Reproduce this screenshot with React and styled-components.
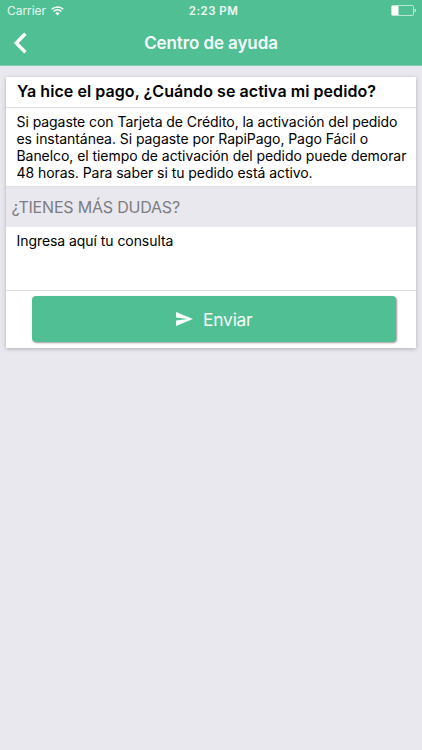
import styled, { createGlobalStyle } from 'styled-components';

const GlobalStyle = createGlobalStyle`
	* {
		box-sizing: border-box;
	}

	body {
		margin: 0;
		background: #e9e8ef;
		font-family: Inter, 'Liberation Sans', sans-serif;
	}
`;

const Screen = styled.div`
	width: 422px;
	height: 750px;
	overflow: hidden;
	background: #e9e8ef;
	color: #000;
`;

const Header = styled.header`
	height: 66px;
	background: #50bf94;
	border-bottom: 1px solid #7fcdb0;
	color: #fff;
`;

const StatusBar = styled.div`
	height: 21px;
	padding: 0 6px 0 7px;
	display: grid;
	grid-template-columns: 1fr auto 1fr;
	align-items: center;
`;

const Carrier = styled.div`
	display: flex;
	align-items: center;
	gap: 5px;
	font-size: 12px;
	letter-spacing: -0.04px;
	color: #e6f6ef;
`;

const Clock = styled.div`
	padding-left: 4px;
	font-size: 11.5px;
	font-weight: 600;
	letter-spacing: 0.45px;
	color: #effaf5;
`;

const Battery = styled.svg`
	justify-self: end;
`;

const NavBar = styled.div`
	height: 44px;
	padding: 0 13px;
	display: grid;
	grid-template-columns: 1fr auto 1fr;
	align-items: center;
`;

const Title = styled.h1`
	margin: 0;
	font-size: 17px;
	font-weight: 600;
	line-height: 20px;
	letter-spacing: -0.1px;
	color: #f4fbf8;
`;

const Card = styled.section`
	margin: 11px 6px 0;
	height: 271px;
	background: #fff;
	box-shadow: 0 1px 4px rgba(0, 0, 0, 0.25);
`;

const Question = styled.h2`
	margin: 0;
	height: 31px;
	padding-left: 11px;
	border-bottom: 1px solid #dcdcdf;
	font-size: 16px;
	font-weight: 600;
	line-height: 29px;
	letter-spacing: 0.06px;
	white-space: nowrap;
`;

const Answer = styled.div`
	height: 78px;
	padding: 5px 0 0 10.5px;
	font-size: 14px;
	line-height: 17px;
	letter-spacing: -0.06px;
	white-space: nowrap;
`;

const Divider = styled.h3`
	margin: 0;
	height: 41px;
	padding-left: 5.5px;
	background: #e9e8ef;
	border-top: 1px solid #dcdcdf;
	color: #7d7c81;
	font-size: 16px;
	font-weight: 400;
	line-height: 40px;
	letter-spacing: -0.2px;
`;

const Message = styled.div`
	height: 64px;
	padding: 5px 10.5px;
	border-bottom: 1px solid #dcdcdf;
	font-size: 14px;
	line-height: 18px;
	letter-spacing: -0.06px;
`;

const Actions = styled.div`
	padding: 5px 20px 0 26px;
`;

const SendButton = styled.button`
	width: 100%;
	height: 46px;
	padding: 0;
	border: 0;
	border-radius: 4px;
	display: flex;
	align-items: center;
	justify-content: center;
	gap: 10.5px;
	background: #50bf94;
	box-shadow: 1px 1px 2px rgba(0, 0, 0, 0.4);
	color: #f4fbf8;
	font-family: inherit;
	font-size: 17.5px;
	letter-spacing: -0.3px;
`;

const App = () => (
	<>
		<GlobalStyle />
		<Screen>
			<Header>
				<StatusBar>
					<Carrier>
						<span>Carrier</span>
						<svg width="13" height="10" viewBox="0 0 13 10" fill="none" stroke="#fff">
							<path d="M.7 3.3a8.3 8.3 0 0 1 11.6 0M2.6 5.4a5.6 5.6 0 0 1 7.8 0" strokeWidth="1.4" />
							<path d="M4.4 7.2a3 3 0 0 1 4.2 0L6.5 9.4z" fill="#fff" stroke="none" />
						</svg>
					</Carrier>
					<Clock>2:23 PM</Clock>
					<Battery width="25" height="11" viewBox="0 0 25 11">
						<rect x=".5" y=".5" width="22" height="10" rx="1.2" fill="none" stroke="#fff" strokeOpacity=".6" />
						<rect x="1" y="1" width="6.5" height="9" fill="#fff" />
						<path d="M23.5 4v3h1.3V4z" fill="#fff" fillOpacity=".7" />
					</Battery>
				</StatusBar>
				<NavBar>
					<svg width="14" height="22" viewBox="0 0 14 22" fill="none" stroke="#fff" strokeWidth="3.4">
						<path d="M12.4 1.7 3.2 11l9.2 9.3" />
					</svg>
					<Title>Centro de ayuda</Title>
				</NavBar>
			</Header>
			<Card>
				<Question>Ya hice el pago, ¿Cuándo se activa mi pedido?</Question>
				<Answer>
					<div>Si pagaste con Tarjeta de Crédito, la activación del pedido</div>
					<div>es instantánea. Si pagaste por RapiPago, Pago Fácil o</div>
					<div>Banelco, el tiempo de activación del pedido puede demorar</div>
					<div>48 horas. Para saber si tu pedido está activo.</div>
				</Answer>
				<Divider>¿TIENES MÁS DUDAS?</Divider>
				<Message>Ingresa aquí tu consulta</Message>
				<Actions>
					<SendButton>
						<svg width="17" height="14" viewBox="0 0 18 15" fill="#fff">
							<path d="M0 15 18 7.5 0 0v5.8l12.5 1.7L0 9.2z" />
						</svg>
						Enviar
					</SendButton>
				</Actions>
			</Card>
		</Screen>
	</>
);

export default App;
